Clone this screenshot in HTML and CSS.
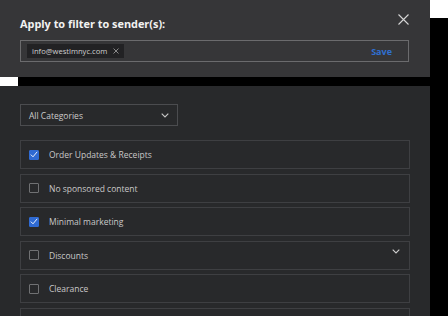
FILE: index.html
```html
<!DOCTYPE html>
<html lang="en">
<head>
    <meta charset="utf-8"/>
    <title>Sender filters</title>
    <link rel="stylesheet" href="styles.css">
</head>
<body>
<div class="stage">
    <div class="shade"></div>
    <div class="sheet">
        <div class="panel sender-panel">
            <div class="panel-head">
                <h2 class="panel-title">Apply to filter to sender(s):</h2>
                <button class="close-btn" aria-label="Close">
                    <svg width="11" height="11" viewBox="0 0 11 11"><path d="M0.5 0.5 L10.5 10.5 M10.5 0.5 L0.5 10.5" stroke="#d6d6d6" stroke-width="1.1" fill="none"/></svg>
                </button>
            </div>
            <div class="sender-input">
                <span class="chip">info@westlmnyc.com
                    <svg width="6" height="6" viewBox="0 0 6 6"><path d="M0.5 0.5 L5.5 5.5 M5.5 0.5 L0.5 5.5" stroke="#8a8a8a" stroke-width="1" fill="none"/></svg>
                </span>
                <button class="save-btn">Save</button>
            </div>
        </div>

        <div class="panel category-panel">
            <div class="select">
                <span>All Categories</span>
                <svg width="8" height="5" viewBox="0 0 8 5"><path d="M0.7 0.7 L4 4 L7.3 0.7" stroke="#c8c8c8" stroke-width="1.1" fill="none"/></svg>
            </div>
            <ul class="options">
                <li class="option"><span class="box checked"><svg width="8" height="7" viewBox="0 0 8 7"><path d="M0.8 3.6 L3 5.8 L7.2 0.8" stroke="#fff" stroke-width="0.9" fill="none"/></svg></span>Order Updates &amp; Receipts</li>
                <li class="option"><span class="box"></span>No sponsored content</li>
                <li class="option"><span class="box checked"><svg width="8" height="7" viewBox="0 0 8 7"><path d="M0.8 3.6 L3 5.8 L7.2 0.8" stroke="#fff" stroke-width="0.9" fill="none"/></svg></span>Minimal marketing</li>
                <li class="option has-sub"><span class="box"></span>Discounts
                    <svg class="sub-arrow" width="8" height="5" viewBox="0 0 8 5"><path d="M0.7 0.7 L4 4 L7.3 0.7" stroke="#d0d0d0" stroke-width="1.1" fill="none"/></svg>
                </li>
                <li class="option"><span class="box"></span>Clearance</li>
                <li class="option"></li>
            </ul>
        </div>
    </div>
</div>
</body>
</html>
```

FILE: styles.css
```css
body {
    margin: 0;
    background: #fff;
    font-family: "Open Sans", "Lato", sans-serif;
}

/* one hard black backdrop behind both panels, 18px down/right */
.stage {
    display: grid;
    width: 430px;
}

.stage > * {
    grid-area: 1 / 1;
}

.shade {
    background: #000;
    margin: 18px -18px -18px 18px;
}

.sheet {
    display: flex;
    flex-direction: column;
    gap: 9px;
}

.panel {
    box-sizing: border-box;
}

.sender-panel {
    background: #363638;
    height: 77px;
    padding: 13px 21px 0 20px;
}

.panel-head {
    display: flex;
    justify-content: space-between;
    align-items: flex-start;
}

.panel-title {
    margin: 4px 0 0;
    font-size: 10.9px;
    line-height: 13px;
    font-weight: 700;
    color: #f2f2f2;
}

.close-btn {
    border: 0;
    background: none;
    padding: 0;
    width: 11px;
    height: 11px;
    display: block;
}

.sender-input {
    margin-top: 10px;
    height: 22px;
    box-sizing: border-box;
    border: 1px solid #6b6b6d;
    display: flex;
    align-items: center;
    justify-content: space-between;
    padding: 0 16px 0 6px;
}

.chip {
    background: #222224;
    color: #cfcfcf;
    font-size: 7.6px;
    height: 14px;
    padding: 0 5px 0 5px;
    display: flex;
    align-items: center;
    gap: 6px;
}

.save-btn {
    border: 0;
    background: none;
    padding: 0;
    color: #2f6fd0;
    font-family: inherit;
    font-weight: 700;
    font-size: 9px;
}

.category-panel {
    background: #28292b;
    height: 230px;
    overflow: hidden;
    padding: 18px 20px 0 20px;
}

.select {
    width: 158px;
    height: 22px;
    box-sizing: border-box;
    border: 1px solid #4b4c4f;
    display: flex;
    align-items: center;
    justify-content: space-between;
    padding: 0 8px 0 8px;
    color: #cccccc;
    font-size: 8.5px;
}

.options {
    list-style: none;
    margin: 14px 0 0;
    padding: 0;
    display: flex;
    flex-direction: column;
    gap: 4.6px;
}

.option {
    height: 29px;
    flex-shrink: 0;
    box-sizing: border-box;
    border: 1px solid #3e3f42;
    display: flex;
    align-items: center;
    padding-left: 8px;
    color: #c8c8c8;
    font-size: 8.5px;
}

.box {
    width: 10px;
    height: 10px;
    box-sizing: border-box;
    border: 1px solid #707173;
    border-radius: 1px;
    margin-right: 10px;
    display: flex;
    align-items: center;
    justify-content: center;
}

.box.checked {
    background: #2f6ad2;
    border-color: #2f6ad2;
}

.has-sub {
    position: relative;
}

.sub-arrow {
    position: absolute;
    right: 9px;
    top: 7px;
}
```
